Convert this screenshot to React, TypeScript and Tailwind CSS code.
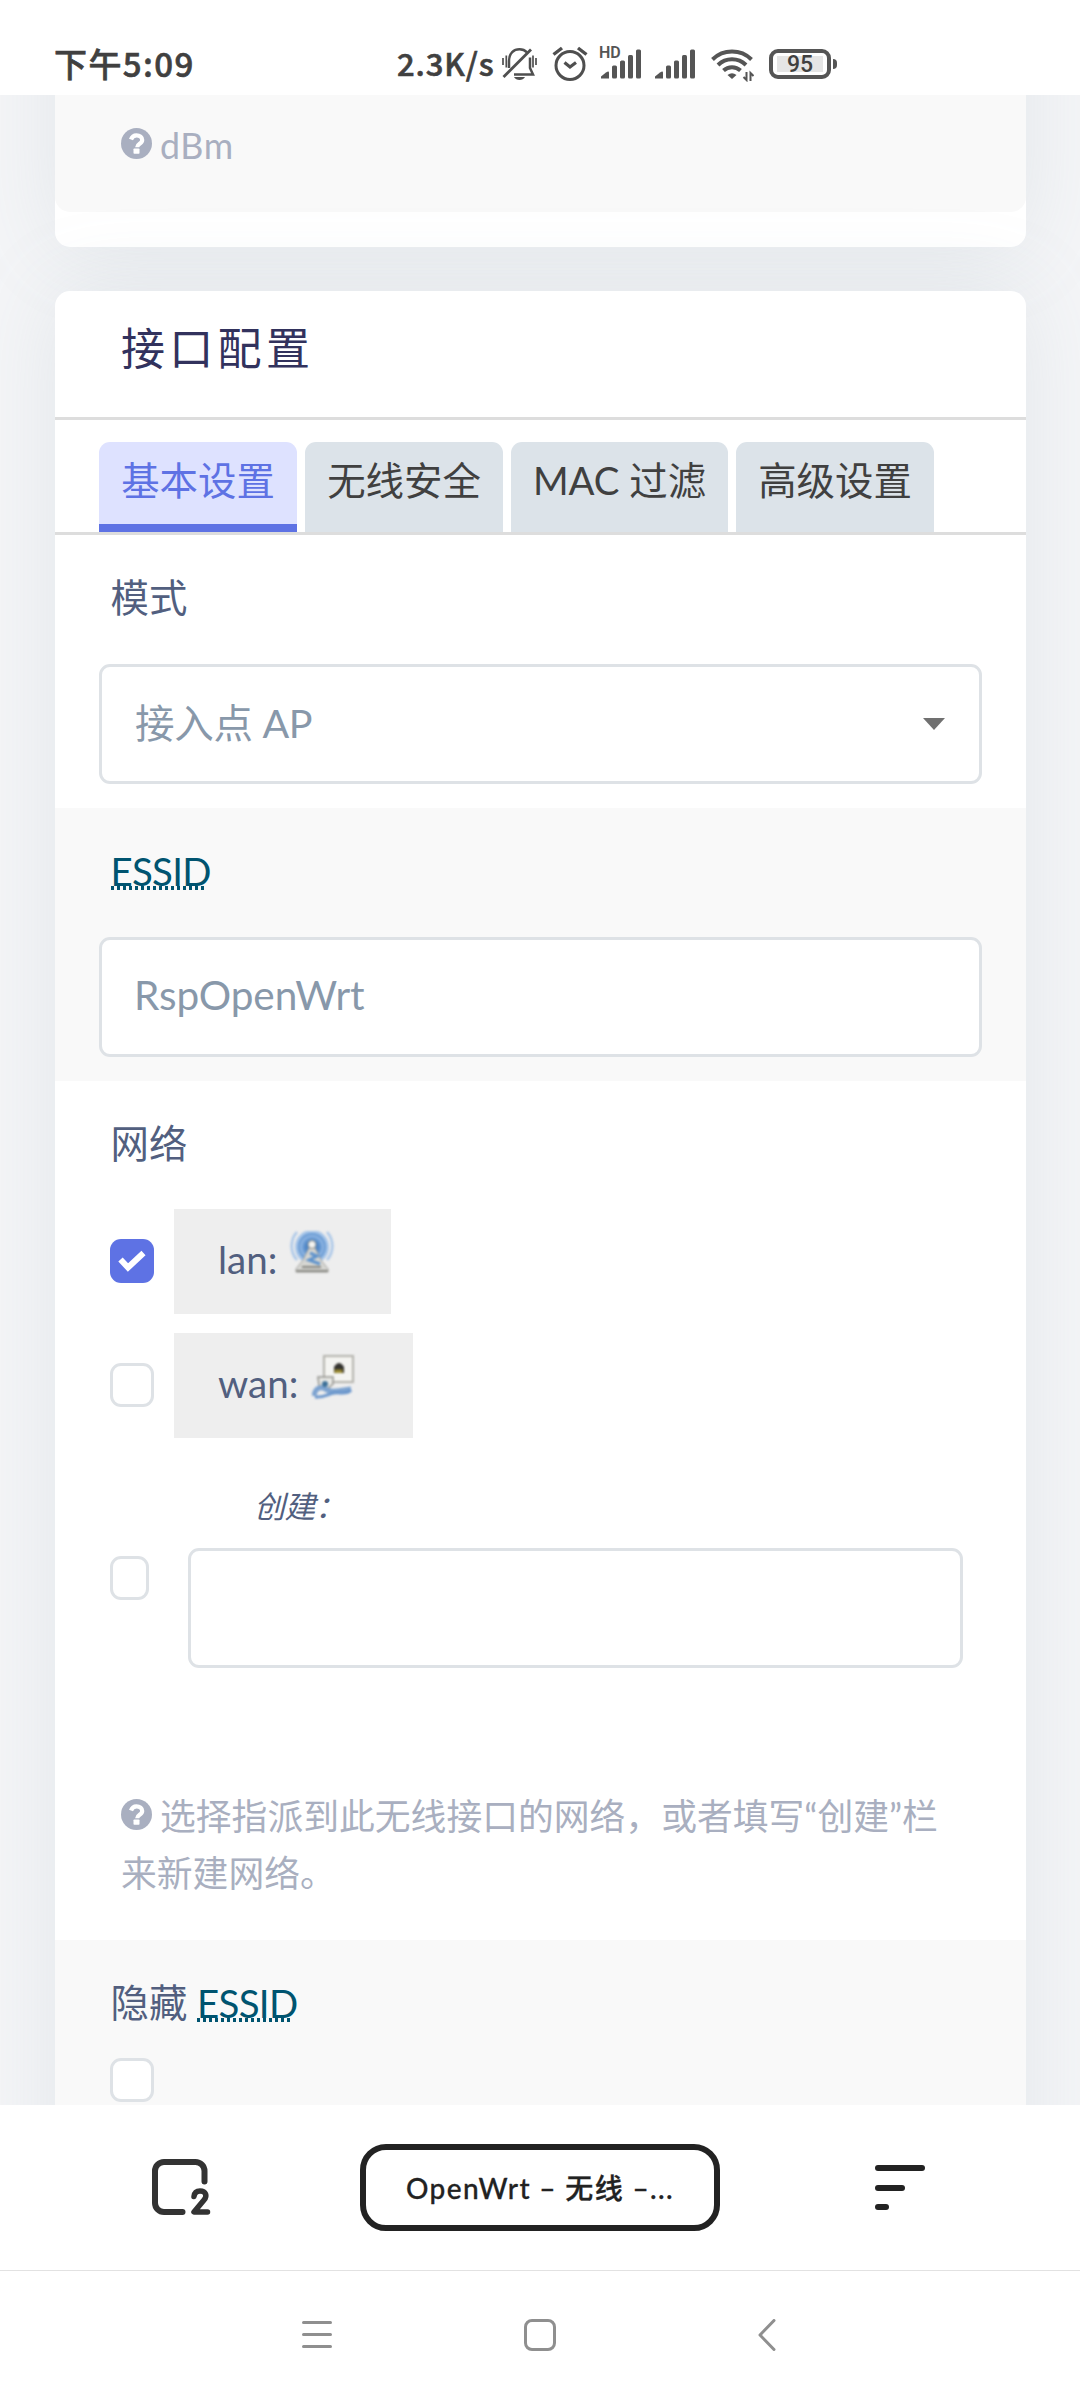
import React from "react";

const cjk = "font-['Noto_Sans_CJK_SC','Liberation_Sans',sans-serif]";
const ui = "font-['Lato','Noto_Sans_CJK_SC',sans-serif]";

function BellOff() {
  return (
    <svg className="h-8 w-[35px]" viewBox="0 0 35 32" fill="none" stroke="#4f4f4f" strokeWidth="2.5">
      <path d="M7 20V13C7 5 12 1.3 17.5 1.3c3 0 5.500 1 7.500 3M28 9.500V20l3 6.500H12" />
      <path d="M1.500 29 29 1.500" strokeWidth="2.8" />
      <path d="M1 10v7M4.300 7.500v12M31 7.500v12M34 10v7" strokeWidth="1.7" />
      <path d="M12 29h11c-2 4-9 4-11 0Z" fill="#4f4f4f" stroke="none" />
    </svg>
  );
}

function Alarm() {
  return (
    <svg className="h-[35px] w-[36px]" viewBox="0 0 36 35" fill="none" stroke="#4f4f4f">
      <circle cx="18" cy="19.500" r="14" strokeWidth="3" />
      <path d="M1.500 8.500 10 2M34.500 8.500 26 2" strokeWidth="3.4" />
      <path d="M12.500 16.500 18 21l6-4.500" strokeWidth="3.2" />
    </svg>
  );
}

function Signal() {
  return (
    <svg className="h-[30px] w-[41px]" viewBox="0 0 41 30" fill="#555">
      <path d="M0 29.500v-2l5-4q3-2 3 0v6Z" />
      <rect x="11" y="16.500" width="5" height="13" rx="1.500" />
      <rect x="19" y="11.500" width="5" height="18" rx="1.500" />
      <rect x="27" y="6" width="5" height="23.500" rx="1.500" />
      <rect x="35" y="0.500" width="5" height="29" rx="1.500" />
    </svg>
  );
}

function Wifi() {
  return (
    <svg className="h-[34px] w-[43px]" viewBox="0 0 43 34" fill="none" stroke="#555" strokeWidth="4">
      <path d="M1.500 11.500a28 28 0 0 1 39 0" />
      <path d="M7 17a20 20 0 0 1 28 0" />
      <path d="M12.500 22.500a12.500 12.500 0 0 1 17 0" />
      <path d="M16.500 27q4.500-3.500 9 0L21 31Z" fill="#555" stroke="none" />
      <path d="M35.500 24v8l-3-3M39.500 33v-8l3 3" strokeWidth="2" />
    </svg>
  );
}

function StatusBar() {
  return (
    <header className={`flex h-[95px] shrink-0 bg-white text-[#404040] ${cjk}`}>
      <span className="mt-[39px] ml-[54px] w-[343px] text-[33px] leading-[48px] font-medium tracking-[1.400px] whitespace-nowrap [-webkit-text-stroke:0.6px_#404040]">
        下午5:09
      </span>
      <span className="mt-[39px] w-[105px] text-[31px] leading-[48px] font-medium tracking-[0.900px] whitespace-nowrap [-webkit-text-stroke:0.6px_#404040]">
        2.3K/s
      </span>
      <span className="mt-12"><BellOff /></span>
      <span className="mt-[46px] ml-[15px]"><Alarm /></span>
      <span className="relative mt-[49px] ml-[13px]">
        <span className="absolute -top-[4px] -left-[3px] bg-white pl-px text-[16px] leading-[16px] font-semibold text-[#555] font-['Roboto',sans-serif]">HD</span>
        <Signal />
      </span>
      <span className="mt-[49px] ml-[13px]"><Signal /></span>
      <span className="mt-12 ml-[15px]"><Wifi /></span>
      <span className="mt-[49px] ml-[15px] flex h-[30px] w-[62px] items-center justify-center rounded-[9px] border-4 border-[#555] p-[3px]">
        <span className="h-full w-[46px] bg-[#e5e5e5] text-center text-[23px] leading-[18px] font-medium text-[#404040] font-['Roboto',sans-serif]">95</span>
      </span>
      <span className="mt-[59px] ml-[2px] h-[10px] w-1 rounded-r bg-[#555]" />
    </header>
  );
}

function HelpIcon() {
  return (
    <svg className="mr-[8px] inline-block h-[31px] w-[31px] align-baseline" viewBox="0 0 31 31">
      <circle cx="15.500" cy="15.500" r="15.500" fill="#a9afc0" />
      <path d="M10 11.500c1-3 3-4.200 5.500-4.200 3.300 0 5.700 1.900 5.700 4.600 0 4-5 3.600-5 7.300" fill="none" stroke="#fff" strokeWidth="4.200" />
      <rect x="12.500" y="20.500" width="6" height="5.300" rx="0.800" fill="#fff" />
    </svg>
  );
}

function Abbr() {
  return (
    <span className="relative top-px inline-block tracking-[-0.700px] text-[#005470]">
      ESSID
      <span className="absolute top-[43px] left-0 h-1 w-[96px] bg-[repeating-linear-gradient(90deg,#005470_0_3px,transparent_3px_6px)]" />
    </span>
  );
}

function Label({ children }: { children: React.ReactNode }) {
  return <div className="pt-[34px] pl-[55.500px] text-[38.400px] leading-[57px] text-[#525f7f]">{children}</div>;
}

function CheckBox({ checked = false, className = "w-11" }: { checked?: boolean; className?: string }) {
  return checked ? (
    <span className={`flex h-11 shrink-0 items-center justify-center rounded-[11px] bg-[#5e72e4] ${className}`}>
      <svg className="h-[22px] w-7" viewBox="0 0 28 22">
        <path d="m2.500 9.500 7.500 8L25.500 3" fill="none" stroke="#fff" strokeWidth="6" />
      </svg>
    </span>
  ) : (
    <span className={`block h-11 shrink-0 rounded-[11px] border-3 border-[#dee2e6] bg-white ${className}`} />
  );
}

function LanIcon() {
  return (
    <svg className="h-11 w-11 blur-[0.800px]" viewBox="0 0 44 44">
      <path d="M7 1a21 21 0 0 0 0 28M37 1a21 21 0 0 1 0 28" fill="none" stroke="#a9c6e8" strokeWidth="2.500" />
      <circle cx="22" cy="16" r="17" fill="#a3c3e8" />
      <circle cx="22" cy="16" r="14" fill="#6b9cd4" />
      <circle cx="22" cy="16" r="11" fill="none" stroke="#8db4e2" strokeWidth="2" />
      <circle cx="22" cy="16" r="7.500" fill="#4f86c6" />
      <path d="M19 17h6l6 12 7 9v3H6v-3l7-9Z" fill="#d6d6d2" stroke="#a5a5a1" />
      <path d="m20 22 7 3-8 4 11 4" fill="none" stroke="#5f93cc" strokeWidth="3" />
      <path d="M6 40h32M12 36h19" stroke="#85857f" strokeWidth="2" />
      <circle cx="22" cy="13.500" r="4" fill="#f4f4f1" stroke="#8c8c86" />
    </svg>
  );
}

function WanIcon() {
  return (
    <svg className="h-11 w-11 blur-[0.800px]" viewBox="0 0 44 44">
      <rect x="12" y="1" width="29" height="26" fill="#f4f4f1" stroke="#b4b3ad" strokeWidth="2" />
      <path d="M22 12q5-8 10 0v6H22Z" fill="#34332f" />
      <path d="M22.500 14.500h8v3.500h-8Z" fill="#9a8b32" />
      <path d="M6 22h15v7l-7 6-7-5Z" fill="#e9e9e5" stroke="#93938e" strokeWidth="1.500" />
      <path d="M2 41c1-9 8-10 13-6 5 3 14 0 24-1" fill="none" stroke="#7da3d0" strokeWidth="5" />
      <path d="M3 42c8 1 13-3 19-4s13 2 17-3" fill="none" stroke="#6a96cc" strokeWidth="3" />
      <circle cx="13" cy="29" r="3" fill="#3d7098" />
    </svg>
  );
}

function Network({ name, checked, icon, width }: { name: string; checked?: boolean; icon: React.ReactNode; width: string }) {
  return (
    <div className="flex pl-[55px]">
      <span className="mt-[30px]"><CheckBox checked={checked} /></span>
      <span className={`ml-5 flex h-[105px] items-start bg-[#eee] pl-11 ${width}`}>
        <span className="mt-[21.500px] flex-1 text-[38.500px] leading-[57px] text-[#525f7f]">{name}</span>
        <span className="mt-[22px] mr-[57px]">{icon}</span>
      </span>
    </div>
  );
}

const field = "flex h-[120px] items-center rounded-[11px] border-3 border-[#dee2e6] bg-white pb-[3px] text-[#8898aa]";
const card = "w-[971px] bg-white shadow-[0_0_88px_rgba(136,152,170,0.15)]";
const tabs = [
  { name: "基本设置", width: "w-[198px]" },
  { name: "无线安全", width: "w-[198px]" },
  { name: "MAC 过滤", width: "w-[217px]" },
  { name: "高级设置", width: "w-[198px]" },
];

export default function App() {
  return (
    <div className={`flex h-[2400px] w-[1080px] flex-col overflow-hidden bg-white ${ui}`}>
      <StatusBar />
      <main className="flex h-[2010px] shrink-0 flex-col items-start gap-11 overflow-hidden bg-[#f4f5f7] pl-[55px]">
        <section className={`-mt-[200px] h-[352px] shrink-0 rounded-[15px] ${card}`}>
          <div className="h-[317px] rounded-b-[15px] bg-[#f9f9f9] pt-[222px] pl-[66px] text-[35.750px] leading-[57px] tracking-[0.600px] text-[#a9afc0]">
            <HelpIcon />dBm
          </div>
        </section>

        <section className={`h-[2200px] shrink-0 rounded-[15px] ${card}`}>
          <h3 className="h-[129px] border-b-3 border-[#ddd] pt-[27px] pl-[66px] text-[44px] leading-[60px] tracking-[4.300px] text-[#32325d]">接口配置</h3>
          <nav className="flex h-[115px] gap-2 border-b-3 border-[#ddd] pt-[22px] pl-11">
            {tabs.map((t, i) => (
              <span
                key={t.name}
                className={`h-[90px] rounded-t-[11px] pt-[10px] text-center text-[38.400px] leading-[57px] whitespace-nowrap ${t.width} ${
                  i === 0 ? "border-b-8 border-[#5e72e4] bg-[#dee2ff] text-[#5e72e4]" : "bg-[#dce3e9] text-[#404040]"
                }`}
              >
                {t.name}
              </span>
            ))}
          </nav>

          <div className="h-[273px]">
            <Label>模式</Label>
            <div className={`mx-11 mt-[38px] justify-between pr-[34px] pl-[33px] text-[39.500px] tracking-[-0.300px] ${field}`}>
              <span>接入点 AP</span>
              <svg className="mt-[3px] h-3 w-[22px]" viewBox="0 0 22 12"><path d="M0 0h22L11 12Z" fill="#707070" /></svg>
            </div>
          </div>

          <div className="h-[273px] bg-[#f9f9f9]">
            <Label><Abbr /></Label>
            <div className={`mx-11 mt-[38px] pl-[32px] text-[40.500px] tracking-[-0.100px] ${field}`}>RspOpenWrt</div>
          </div>

          <div className="h-[859px]">
            <Label>网络</Label>
            <div className="mt-[37px] flex flex-col gap-[19px]">
              <Network name="lan:" checked icon={<LanIcon />} width="w-[217px]" />
              <Network name="wan:" icon={<WanIcon />} width="w-[239px]" />
            </div>
            <div className="mt-[46px] flex pl-[55px]">
              <span className="mt-[72px]"><CheckBox className="w-[39px]" /></span>
              <div className="ml-[39px] w-[775px]">
                <div className="h-[46px] pl-[66px] text-[30.800px] leading-[46px] tracking-[-0.300px] text-[#525f7f] italic">创建：</div>
                <div className={`mt-[18px] ${field}`} />
              </div>
            </div>
            <p className="mt-[120px] pl-[66px] text-[35.800px] leading-[57px] whitespace-nowrap text-[#a9afc0]">
              <HelpIcon />选择指派到此无线接口的网络，或者填写“创建”栏
              <br />
              来新建网络。
            </p>
          </div>

          <div className="h-[300px] bg-[#f9f9f9]">
            <Label>隐藏 <Abbr /></Label>
            <div className="mt-[27px] pl-[55px]"><CheckBox /></div>
          </div>
        </section>
      </main>

      <footer className="flex h-[166px] shrink-0 items-start border-b border-[#e2e2e2]">
        <svg className="mt-[54px] ml-[152px] h-[57px] w-[59px]" viewBox="0 0 59 57" fill="none" stroke="#333" strokeLinecap="round">
          <path d="M52.500 22.500V12a9 9 0 0 0-9-9H12a9 9 0 0 0-9 9v32a9 9 0 0 0 9 9h18.500" strokeWidth="6" />
          <path d="M42 37.500c.5-4 3-5.500 6-5.500 6 0 7.500 5 4 9L42 53h13.500" strokeWidth="5.500" strokeLinejoin="round" />
        </svg>
        <div className="mt-[39px] ml-[149px] flex h-[87px] w-[360px] items-center justify-center rounded-[26px] border-6 border-[#222]">
          <span className="text-[28px] leading-10 font-medium tracking-[1.350px] whitespace-nowrap text-[#222] [-webkit-text-stroke:0.3px_#222]">OpenWrt – 无线 –...</span>
        </div>
        <div className="mt-[60px] ml-[155px] flex flex-col gap-[13.500px]">
          <span className="h-[6px] w-[50px] rounded-full bg-[#222]" />
          <span className="h-[6px] w-[30px] rounded-full bg-[#222]" />
          <span className="h-[6px] w-[14px] rounded-full bg-[#222]" />
        </div>
      </footer>

      <div className="flex h-[129px] shrink-0 items-start pt-12">
        <svg className="ml-[302px] h-8 w-[30px]" viewBox="0 0 30 32" stroke="#8f8f8f" strokeWidth="3" strokeLinecap="round">
          <path d="M1.500 3.500h27M1.500 15.500h27M1.500 27.500h27" />
        </svg>
        <span className="ml-[192px] h-8 w-8 rounded-[8px] border-3 border-[#8f8f8f]" />
        <svg className="ml-[202px] h-8 w-[18px]" viewBox="0 0 18 32" fill="none" stroke="#8f8f8f" strokeWidth="3" strokeLinecap="round" strokeLinejoin="round">
          <path d="M16 1.500 2 16l14 14.500" />
        </svg>
      </div>
    </div>
  );
}
